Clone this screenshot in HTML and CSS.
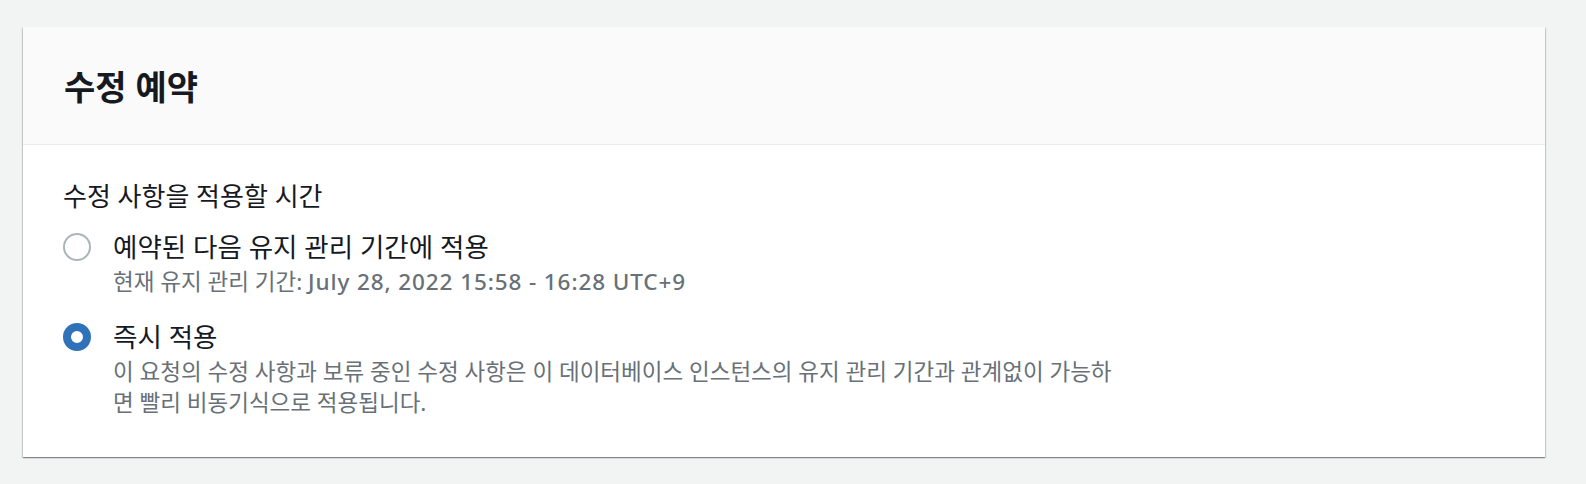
FILE: index.html
```html
<!DOCTYPE html>
<html lang="ko">
<head>
<meta charset="utf-8">
<title>수정 예약</title>
<link rel="stylesheet" href="styles.css">
</head>
<body>
<div class="page">
  <section class="card">
    <header class="card-header">
      <h2 class="card-title">수정 예약</h2>
    </header>
    <div class="card-body">
      <div class="field-label">수정 사항을 적용할 시간</div>
      <div class="radio-group">
        <div class="radio-option">
          <span class="radio"></span>
          <div class="radio-text">
            <div class="radio-label">예약된 다음 유지 관리 기간에 적용</div>
            <div class="radio-desc">현재 유지 관리 기간: <span class="window-time">July 28, 2022 15:58 - 16:28 UTC+9</span></div>
          </div>
        </div>
        <div class="radio-option">
          <span class="radio radio-checked"></span>
          <div class="radio-text">
            <div class="radio-label">즉시 적용</div>
            <div class="radio-desc radio-desc-wide">이 요청의 수정 사항과 보류 중인 수정 사항은 이 데이터베이스 인스턴스의 유지 관리 기간과 관계없이 가능하면 빨리 비동기식으로 적용됩니다.</div>
          </div>
        </div>
      </div>
    </div>
  </section>
</div>
</body>
</html>
```

FILE: styles.css
```css
* {
  box-sizing: border-box;
}

html, body {
  margin: 0;
  padding: 0;
}

body {
  background: #f2f3f3;
  font-family: "Noto Sans", "Noto Sans CJK KR", sans-serif;
  color: #16191f;
}

.page {
  padding: 27px 41px 28px 23px;
}

.card {
  background: #ffffff;
  box-shadow: 0 1px 1px 0 rgba(0, 28, 36, 0.3), 1px 1px 1px 0 rgba(0, 28, 36, 0.15), -1px 1px 1px 0 rgba(0, 28, 36, 0.15);
}

.card-header {
  background: #fafafa;
  border-bottom: 1px solid #eaeded;
  padding: 41px 40px 38px 41px;
}

.card-title {
  margin: 0;
  font-size: 34px;
  line-height: 38px;
  font-weight: 700;
  color: #16191f;
}

.card-body {
  padding: 35px 40px 39px 40px;
}

.field-label {
  font-size: 26px;
  line-height: 32px;
  color: #16191f;
}

.radio-group {
  display: flex;
  flex-direction: column;
  gap: 24px;
  margin-top: 19px;
}

.radio-option {
  display: flex;
  align-items: flex-start;
  gap: 22px;
}

.radio {
  flex: none;
  width: 28px;
  height: 28px;
  margin-top: 2px;
  border-radius: 50%;
  border: 2.5px solid #aab7b8;
  background: #ffffff;
}

.radio-checked {
  border: 8px solid #2f72b9;
  background: #ffffff;
}

.radio-label {
  font-size: 26.5px;
  line-height: 32px;
  color: #16191f;
}

.radio-desc {
  margin-top: 3px;
  font-size: 22.5px;
  line-height: 31px;
  color: #687078;
}

.window-time {
  font-weight: 500;
  letter-spacing: 0.9px;
}

.radio-desc-wide {
  max-width: 1008px;
}
```
